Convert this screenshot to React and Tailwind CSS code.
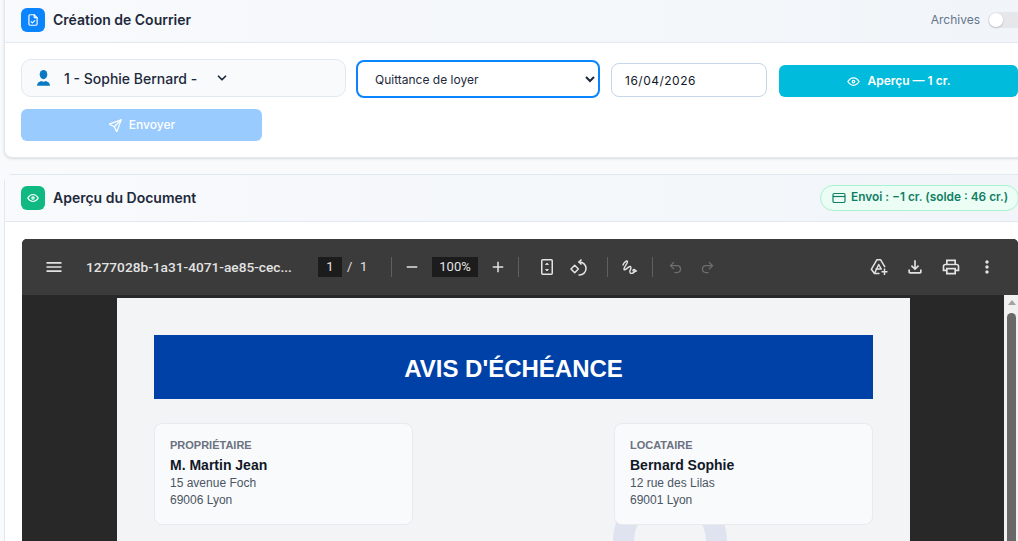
import React from "react";
import { TbFileCheck, TbEye, TbSend, TbChevronDown } from "react-icons/tb";
import { Undo2, Redo2 } from "lucide-react";

const inter = "font-['Inter','Noto_Sans',sans-serif]";

const Tool = ({ className = "text-[#e3e3e3]", children }) => (
  <div className={`flex h-8 w-8 shrink-0 items-center justify-center ${className}`}>{children}</div>
);

const Divider = ({ className = "" }) => <div className={`h-5 w-px shrink-0 bg-[#5f5f5f] ${className}`} />;

const MatIcon = ({ d, size = 20 }) => (
  <svg width={size} height={size} viewBox="0 0 24 24" fill="currentColor">
    <path d={d} />
  </svg>
);

const PartyCard = ({ label, name, street, city }) => (
  <div className="relative z-10 h-[102px] w-[259px] rounded-lg border border-[#e8eaee] bg-[#f9fafc] px-[15px] pt-[13px]">
    <p className="text-[11px] leading-4 font-bold text-[#6b7280]">{label}</p>
    <p className="mt-[3px] text-[14px] leading-[19px] font-bold text-[#111827]">{name}</p>
    <p className="text-[12px] leading-[17px] text-[#4b5563]">{street}</p>
    <p className="text-[12px] leading-[17px] text-[#4b5563]">{city}</p>
  </div>
);

const App = () => {
  return (
    <div className={`h-[541px] w-[1018px] overflow-hidden bg-[#f9fafb] pl-1 ${inter}`}>
      <div className="-mt-[3px] w-[1035px] rounded-b-lg border border-[#e2e8f0] bg-white shadow-[0_1px_3px_rgba(0,0,0,0.12)]">
        <div className="flex h-[45px] items-center justify-between border-b border-[#e2e8f0] bg-gradient-to-r from-[#f8fafc] to-[#f1f5f9] pl-4">
          <div className="flex items-center gap-2">
            <div className="flex h-6 w-6 items-center justify-center rounded-md bg-[#0a84ff] text-white">
              <TbFileCheck size={14} />
            </div>
            <h2 className="mb-[2px] text-[14px] font-semibold text-[#1e293b]">Création de Courrier</h2>
          </div>
          <div className="mr-[14px] flex items-center gap-2">
            <span className="text-[12px] text-[#64748b]">Archives</span>
            <div className="flex h-4 w-[36px] items-center rounded-full bg-[#e5e7eb] pl-[1px]">
              <div className="h-[14px] w-[14px] rounded-full bg-white shadow-[0_1px_2px_rgba(0,0,0,0.2)]" />
            </div>
          </div>
        </div>
        <div className="px-4 pt-4 pb-4">
          <div className="flex items-start">
            <div className="flex h-[38px] w-[325px] shrink-0 items-center rounded-[10px] border border-[#e2e8f0] bg-[#f8fafc] pl-[15px]">
              <svg width="13" height="16" viewBox="0 0 13 16" fill="#0b78c2">
                <ellipse cx="6.500" cy="4.600" rx="3.800" ry="4.600" />
                <path d="M0 15.800c0-3 2-4 4.300-4.800.6.400 1.400.7 2.200.7s1.600-.3 2.200-.7c2.300.8 4.300 1.800 4.300 4.800z" />
              </svg>
              <span className="ml-[14px] text-[14px] font-medium text-[#1e293b]">1 - Sophie Bernard -</span>
              <TbChevronDown size={14} strokeWidth={3} className="ml-[18px] text-[#1e293b]" />
            </div>
            <select
              defaultValue="q"
              className="mt-px ml-[10px] h-[38px] w-[244px] shrink-0 rounded-lg border-2 border-[#0a84ff] bg-white pl-[13px] pr-1 text-[12px] text-[#1e293b] outline-none"
            >
              <option value="q">Quittance de loyer</option>
            </select>
            <input
              readOnly
              value="16/04/2026"
              className="mt-1 ml-[11px] h-[34px] w-[156px] shrink-0 rounded-lg border border-[#c7d5e6] bg-white pl-[13px] text-[12px] tracking-[0.5px] text-[#111827] outline-none"
            />
            <button className="mt-1.5 ml-3 flex h-8 w-[239px] shrink-0 items-center justify-center gap-[6px] rounded-md bg-[#00bbdb] text-[12px] font-semibold text-white">
              <TbEye size={15} />
              Aperçu — 1 cr.
            </button>
          </div>
          <button className="mt-[11px] flex h-8 w-[241px] items-center justify-center gap-[6px] rounded-md bg-[#99cbff] text-[12px] font-medium text-white">
            <TbSend size={15} />
            Envoyer
          </button>
        </div>
      </div>

      <div className="mt-4 w-[1035px] rounded-t-lg border border-[#e2e8f0] bg-white">
        <div className="flex h-[47px] items-center justify-between border-b border-[#e2e8f0] bg-gradient-to-r from-[#f8fafc] to-[#f1f5f9] pl-4">
          <div className="flex items-center gap-2">
            <div className="flex h-6 w-6 items-center justify-center rounded-md bg-[#10b981] text-white">
              <TbEye size={14} />
            </div>
            <h2 className="mb-[2px] text-[14px] font-semibold text-[#1e293b]">Aperçu du Document</h2>
          </div>
          <div className="mr-[19px] flex h-[26px] w-[199px] items-center gap-[5px] rounded-full border border-[#a7f3d0] bg-[#ecfdf5] pl-[11px] text-[11.85px] font-semibold whitespace-nowrap text-[#0f7f63]">
            <svg width="14" height="14" viewBox="0 0 14 14" fill="none" stroke="currentColor" strokeWidth="1.2">
              <rect x="1" y="2.500" width="12" height="9" rx="1.200" />
              <path d="M1 5.500h12" />
            </svg>
            Envoi : −1 cr. (solde : 46 cr.)
          </div>
        </div>
        <div className="pt-[17px] pl-[17px]">
          <div className="h-[302px] w-[996px] overflow-hidden rounded-t-[5px] bg-[#282828] font-['Roboto',sans-serif]">
            <div className="flex h-14 items-center bg-[#3b3b3b] pl-4 pr-[13px] text-[#e3e3e3]">
              <Tool>
                <MatIcon d="M3 18h18v-2H3v2zm0-5h18v-2H3v2zm0-7v2h18V6H3z" />
              </Tool>
              <span className="ml-4 w-[208px] shrink-0 text-[13.7px] font-medium whitespace-nowrap">1277028b-1a31-4071-ae85-cec...</span>
              <div className="ml-6 flex h-5 w-6 shrink-0 items-center justify-center bg-[#1c1c1c] text-[13px]">1</div>
              <span className="ml-[5px] w-[13px] shrink-0 text-[13px]">/</span>
              <span className="w-[31px] shrink-0 text-[13px]">1</span>
              <Divider />
              <Tool className="ml-1 text-[#e3e3e3]">
                <MatIcon d="M19 13H5v-2h14v2z" size={18} />
              </Tool>
              <div className="ml-1 flex h-5 w-[46px] shrink-0 items-center justify-center bg-[#1c1c1c] text-[13px]">100%</div>
              <Tool className="ml-1 text-[#e3e3e3]">
                <MatIcon d="M19 13h-6v6h-2v-6H5v-2h6V5h2v6h6v2z" size={18} />
              </Tool>
              <Divider className="ml-1" />
              <Tool className="ml-3 text-[#e3e3e3]">
                <svg width="20" height="20" viewBox="0 0 20 20" fill="none" stroke="currentColor" strokeWidth="1.500">
                  <rect x="4.750" y="2.750" width="10.500" height="14.500" rx="1" />
                  <path d="M8.500 7.500 10 6l1.500 1.500z M8.500 12.500 10 14l1.500-1.500z" fill="currentColor" strokeWidth="0.800" />
                </svg>
              </Tool>
              <Tool>
                <svg width="20" height="20" viewBox="0 0 20 20" fill="none" stroke="currentColor" strokeWidth="1.500">
                  <path d="M2 12 5.700 8.300 9.400 12 5.700 15.700z" strokeLinejoin="round" />
                  <path d="M9.500 5h1a6.500 6.500 0 0 1 0 13h-1" />
                  <path d="M12.500 2.500 10 5l2.500 2.500" />
                </svg>
              </Tool>
              <Divider className="ml-3" />
              <Tool className="ml-[5px] text-[#e3e3e3]">
                <svg width="20" height="20" viewBox="0 0 20 20" fill="none" stroke="currentColor" strokeWidth="1.400" strokeLinecap="round" strokeLinejoin="round">
                  <path d="M4 8C5 5 8 3 8.500 4.500 9 6.500 4.500 10 5 12.500 5.500 14 9 10 11 9.500 12.500 9.200 12 12 11 13.500 10 16 12 17 14 16 16.500 15 17 12.500 15 12.500 13.500 12.500 13 15 17.500 14" />
                </svg>
              </Tool>
              <Divider className="ml-[7px]" />
              <Tool className="ml-1.5 text-[#6e6e6e]">
                <Undo2 size={15} />
              </Tool>
              <Tool className="text-[#6e6e6e]">
                <Redo2 size={15} />
              </Tool>
              <div className="flex-1" />
              <Tool className="w-9 text-[#e3e3e3]">
                <svg width="20" height="20" viewBox="0 0 20 20" fill="none" stroke="currentColor" strokeWidth="1.500" strokeLinejoin="round">
                  <path d="M10.500 16.500H5.500L2.300 12.300 8 2.700h3.500l4.500 7.500" />
                  <path d="M5.500 16.500 9.700 7.500l2.500 4.500H6.500" />
                  <path d="M15.500 11.500v6.500M12.500 14.800h6" />
                </svg>
              </Tool>
              <Tool className="w-9 text-[#e3e3e3]">
                <MatIcon d="M18 15v3H6v-3H4v3c0 1.100.9 2 2 2h12c1.100 0 2-.9 2-2v-3h-2zm-1-4l-1.410-1.410L13 12.170V4h-2v8.170L8.410 9.590 7 11l5 5 5-5z" />
              </Tool>
              <Tool className="w-9 text-[#e3e3e3]">
                <MatIcon d="M19 8h-1V3H6v5H5c-1.660 0-3 1.340-3 3v6h4v4h12v-4h4v-6c0-1.660-1.340-3-3-3zM8 5h8v3H8V5zm8 12v2H8v-4h8v2zm2-2v-2H6v2H4v-4c0-.55.45-1 1-1h14c.55 0 1 .45 1 1v4h-2z" />
              </Tool>
              <Tool className="w-9 text-[#e3e3e3]">
                <MatIcon d="M12 8c1.100 0 2-.9 2-2s-.9-2-2-2-2 .9-2 2 .9 2 2 2zm0 2c-1.100 0-2 .9-2 2s.9 2 2 2 2-.9 2-2-.9-2-2-2zm0 6c-1.100 0-2 .9-2 2s.9 2 2 2 2-.9 2-2-.9-2-2-2z" />
              </Tool>
            </div>
            <div className="flex h-[246px]">
              <div className="flex-1 pt-[3px] pl-[95px]">
                <div className="relative h-[300px] w-[793px] overflow-hidden bg-[#f3f4f6] px-[37px] pt-[37px] font-['Liberation_Sans',Arial,sans-serif]">
                  <div className="flex h-16 items-center justify-center bg-[#0041a8] pt-[3px] text-[24px] font-bold text-white">AVIS D'ÉCHÉANCE</div>
                  <div className="mt-6 flex justify-between">
                    <PartyCard label="PROPRIÉTAIRE" name="M. Martin Jean" street="15 avenue Foch" city="69006 Lyon" />
                    <PartyCard label="LOCATAIRE" name="Bernard Sophie" street="12 rue des Lilas" city="69001 Lyon" />
                  </div>
                  <svg className="absolute top-[186px] left-[496px]" width="114" height="114" viewBox="0 0 114 114" fill="none">
                    <circle cx="57" cy="57" r="46.500" stroke="#dfe3ef" strokeWidth="21" />
                  </svg>
                </div>
              </div>
              <div className="relative h-full w-[14px] shrink-0 bg-[#f1f1f1]">
                <div className="absolute top-[5px] left-[4px] h-0 w-0 border-x-[4px] border-b-[5px] border-x-transparent border-b-[#a3a3a3]" />
                <div className="absolute top-[18px] left-[3px] h-[240px] w-[9px] rounded-full bg-[#686868]" />
              </div>
            </div>
          </div>
        </div>
      </div>
    </div>
  );
};

export default App;
